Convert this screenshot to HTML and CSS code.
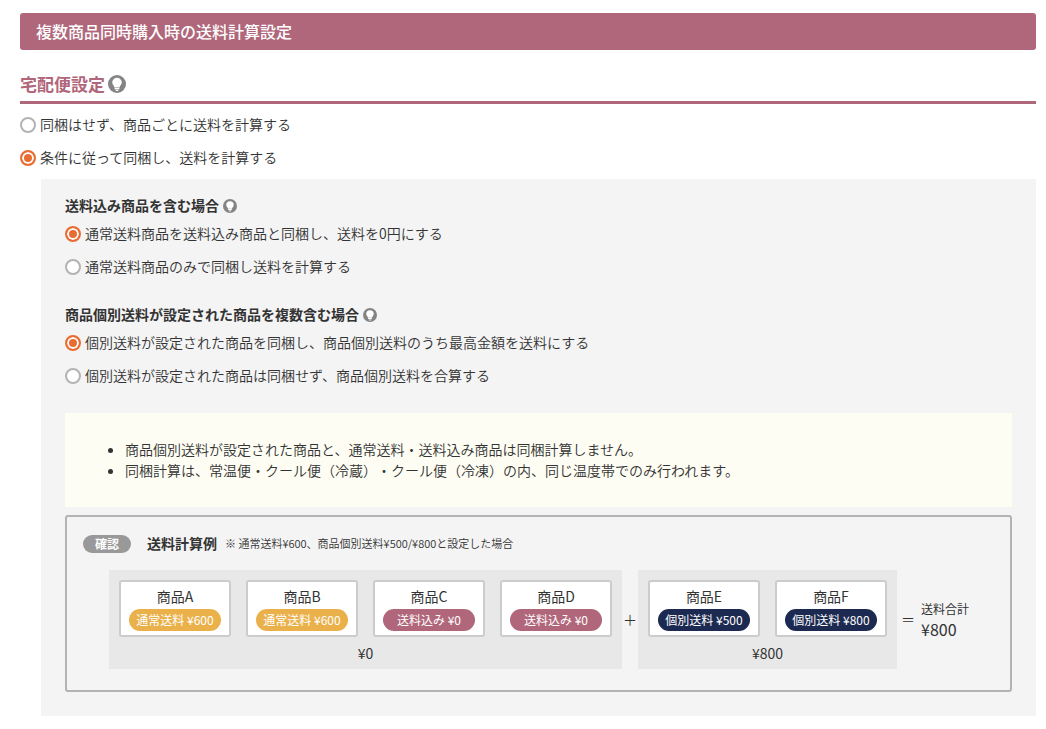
FILE: index.html
```html
<!DOCTYPE html>
<html lang="ja">
<head>
<meta charset="utf-8">
<meta name="viewport" content="width=device-width, initial-scale=1">
<title>複数商品同時購入時の送料計算設定</title>
<link rel="stylesheet" href="styles.css">
</head>
<body>
<svg class="sprite" aria-hidden="true">
  <symbol id="bulb" viewBox="0 0 18 18">
    <circle cx="9" cy="9" r="9" fill="#848484"/>
    <path d="M9 2.8a4.8 4.8 0 0 0-4.8 4.8c0 2.1 1.9 2.8 2.2 4.8h5.2c.3-2 2.2-2.7 2.2-4.8A4.8 4.8 0 0 0 9 2.8z" fill="#fff"/>
    <path d="M6.6 13h4.8v1.3H6.6zM7.2 14.8h3.6L9.9 16H8.1z" fill="#fff"/>
  </symbol>
</svg>
<main class="page">
  <h1 class="page-title">複数商品同時購入時の送料計算設定</h1>
  <h2 class="section-title">宅配便設定<svg class="hint hint-large" aria-hidden="true"><use href="#bulb"/></svg></h2>

  <div class="options">
    <label class="option"><input class="radio" type="radio" name="bundle">同梱はせず、商品ごとに送料を計算する</label>
    <label class="option"><input class="radio" type="radio" name="bundle" checked>条件に従って同梱し、送料を計算する</label>
  </div>

  <section class="panel">
    <h3 class="group-title">送料込み商品を含む場合<svg class="hint" aria-hidden="true"><use href="#bulb"/></svg></h3>
    <div class="options">
      <label class="option"><input class="radio" type="radio" name="included" checked>通常送料商品を送料込み商品と同梱し、送料を0円にする</label>
      <label class="option"><input class="radio" type="radio" name="included">通常送料商品のみで同梱し送料を計算する</label>
    </div>

    <h3 class="group-title group-title-next">商品個別送料が設定された商品を複数含む場合<svg class="hint" aria-hidden="true"><use href="#bulb"/></svg></h3>
    <div class="options">
      <label class="option"><input class="radio" type="radio" name="individual" checked>個別送料が設定された商品を同梱し、商品個別送料のうち最高金額を送料にする</label>
      <label class="option"><input class="radio" type="radio" name="individual">個別送料が設定された商品は同梱せず、商品個別送料を合算する</label>
    </div>

    <ul class="notes">
      <li>商品個別送料が設定された商品と、通常送料・送料込み商品は同梱計算しません。</li>
      <li>同梱計算は、常温便・クール便（冷蔵）・クール便（冷凍）の内、同じ温度帯でのみ行われます。</li>
    </ul>

    <section class="example">
      <header class="example-head">
        <span class="badge">確認</span>
        <h4 class="example-title">送料計算例</h4>
        <span class="example-note">※ 通常送料¥600、商品個別送料¥500/¥800と設定した場合</span>
      </header>
      <div class="formula">
        <div class="bundle">
          <div class="cards">
            <div class="card">商品A<span class="fee fee-normal">通常送料 ¥600</span></div>
            <div class="card">商品B<span class="fee fee-normal">通常送料 ¥600</span></div>
            <div class="card">商品C<span class="fee fee-included">送料込み ¥0</span></div>
            <div class="card">商品D<span class="fee fee-included">送料込み ¥0</span></div>
          </div>
          <div class="subtotal">¥0</div>
        </div>
        <span class="operator">＋</span>
        <div class="bundle">
          <div class="cards">
            <div class="card">商品E<span class="fee fee-individual">個別送料 ¥500</span></div>
            <div class="card">商品F<span class="fee fee-individual">個別送料 ¥800</span></div>
          </div>
          <div class="subtotal">¥800</div>
        </div>
        <span class="operator operator-equal">＝</span>
        <div class="total"><span class="total-label">送料合計</span><span class="total-value">¥800</span></div>
      </div>
    </section>
  </section>
</main>
</body>
</html>
```
FILE: styles.css
```css
* { box-sizing: border-box; }
body {
  margin: 0;
  background: #fff;
  color: #333;
  font: 350 14px/21px "Noto Sans CJK JP", sans-serif;
  text-spacing-trim: space-all;
}
h1, h2, h3, h4 { margin: 0; }
.sprite { position: absolute; width: 0; height: 0; }
.page { padding: 13px 10px 13px 20px; }
.page-title {
  padding: 6px 16px 7px;
  border-radius: 3px;
  background: #b0677b;
  color: #fff;
  font-size: 16px;
  font-weight: 500;
  line-height: 24px;
}
.section-title {
  display: flex;
  align-items: center;
  gap: 3px;
  margin: 21px 0 10px;
  padding-bottom: 5px;
  border-bottom: 3px solid #b0677b;
  color: #b0677b;
  font-size: 17px;
  font-weight: 700;
  line-height: 25px;
}
.hint { width: 14px; height: 14px; }
.hint-large { width: 18px; height: 18px; }
.options {
  display: flex;
  flex-direction: column;
  align-items: flex-start;
  gap: 12px;
}
.option {
  display: flex;
  align-items: center;
  gap: 4px;
}
.radio {
  appearance: none;
  flex: none;
  width: 16px;
  height: 16px;
  margin: 0;
  border: 2px solid #b3b3b3;
  border-radius: 50%;
  background: #fff;
}
.radio:checked {
  border-color: #e96d33;
  background: #e96d33;
  box-shadow: inset 0 0 0 2px #fff;
}
.panel {
  margin: 11px 0 0 21px;
  padding: 16px 24px 24px;
  background: #f4f4f4;
}
.group-title {
  display: flex;
  align-items: center;
  gap: 4px;
  margin-bottom: 7px;
  font-size: 14px;
  font-weight: 700;
  line-height: 21px;
}
.group-title-next { margin-top: 27px; }
.notes {
  margin: 27px 0 8px;
  padding: 26px 24px 26px 60px;
  background: #fdfdf3;
}
.example {
  padding: 16px 16px 21px;
  border: 2px solid #b3b3b3;
  border-radius: 3px;
}
.example-head {
  display: flex;
  align-items: center;
}
.badge {
  padding: 0 12px;
  border-radius: 9px;
  background: #999;
  color: #fff;
  font-size: 12px;
  font-weight: 700;
  line-height: 18px;
}
.example-title {
  margin: 0 8px 0 16px;
  font-size: 14px;
}
.example-note { font-size: 11px; }
.formula {
  display: flex;
  align-items: center;
  margin: 16px 0 0 26px;
  font-weight: 400;
}
.bundle {
  padding: 10px;
  background: #e8e8e8;
  text-align: center;
}
.cards { display: flex; gap: 15px; }
.card {
  width: 112px;
  padding: 4px 8px;
  border: 2px solid #ccc;
  border-radius: 3px;
  background: #fff;
}
.fee {
  display: block;
  margin-top: 2px;
  border-radius: 11px;
  color: #fff;
  font-size: 12px;
  line-height: 22px;
  white-space: nowrap;
}
.fee-normal { background: #eab14a; }
.fee-included { background: #b0677b; }
.fee-individual { background: #1c2951; }
.subtotal { padding-top: 10px; line-height: 12px; }
.operator {
  width: 16px;
  font-weight: 350;
  text-align: center;
}
.operator-equal { width: 22px; margin-right: 2px; }
.total { display: flex; flex-direction: column; white-space: nowrap; }
.total-label { font-size: 12px; line-height: 18px; }
.total-value { font-size: 16px; line-height: 22px; }
```
